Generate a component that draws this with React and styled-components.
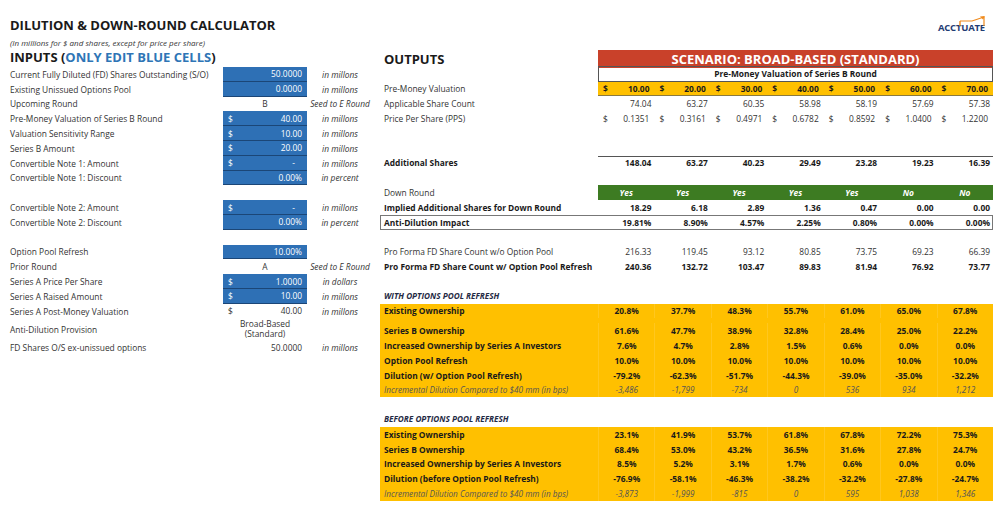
import styled, { createGlobalStyle } from "styled-components";

const GlobalStyle = createGlobalStyle`
  body {
    margin: 0;
    background: #fff;
    font-family: "Open Sans", "Liberation Sans", sans-serif;
    color: #333;
  }
`

const Page = styled.div`
  width: 1005px;
  height: 521px;
  overflow: hidden;
`

const Header = styled.header`
  display: flex;
  justify-content: space-between;
  align-items: center;
  height: 25px;
  padding: 13px 20px 0 10px;
`

const Title = styled.h1`
  margin: 0;
  font-size: 13px;
  line-height: 15px;
  font-weight: 700;
  color: #1a1a1a;
`

const Logo = styled.div`
  position: relative;
  font-size: 9.5px;
  font-weight: 700;
  color: #1f3c74;
  letter-spacing: -0.2px;
  margin-top: 4px;
  svg{
    position: absolute;
    left: 20px;
    top: -6px;
  }
`

const Main = styled.div`
  display: flex;
`

const Left = styled.div`
  width: 370px;
  padding-left: 10px;
`

const Note = styled.div`
  height: 10px;
  line-height: 10px;
  font-size: 8px;
  font-style: italic;
  color: #333;
  white-space: nowrap;
`

const InputsTitle = styled.h2`
  margin: 0;
  height: 19px;
  line-height: 19px;
  font-size: 13px;
  font-weight: 700;
  color: #1a1a1a;
  white-space: nowrap;
  span{
    color: #2e75b6;
  }
`

const InRow = styled.div`
  display: grid;
  grid-template-columns: 213px 84px 66px;
  height: ${p => p.$h || 14.8}px;
  font-size: 8.4px;
  align-items: center;
`

const Label = styled.div`
  white-space: nowrap;
`

const Value = styled.div`
  height: 100%;
  display: flex;
  align-items: center;
  justify-content: ${p => p.$center ? "center" : p.$cur ? "space-between" : "flex-end"};
  padding: 0 5px;
  box-sizing: border-box;
  text-align: center;
  line-height: 10px;
  background: ${p => p.$blue ? "#2e70b5" : "transparent"};
  color: ${p => p.$blue ? "#fff" : "#333"};
  box-shadow: ${p => p.$blue ? "inset 0 -1px 0 #1b4677" : "none"};
  .dash{
    padding-right: 7px;
  }
`

const Unit = styled.div`
  text-align: center;
  font-style: italic;
  white-space: nowrap;
`

const Right = styled.div`
  width: 613px;
  margin-top: 12px;
`

const OutRow = styled.div`
  display: grid;
  grid-template-columns: 218px repeat(7, 1fr);
  height: ${p => p.$h || 14.8}px;
  align-items: center;
  font-size: 8.4px;
  font-weight: ${p => p.$bold ? 700 : 400};
  color: ${p => p.$bold ? "#1a1a1a" : "#333"};
  box-shadow: ${p => p.$boxed ? "inset 0 0 0 1px #777" : "none"};
  margin-bottom: ${p => p.$gap || 0}px;
`

const OutLabel = styled.div`
  padding-left: 4px;
  white-space: nowrap;
`

const OutputsTitle = styled.h2`
  margin: 0;
  padding-left: 4px;
  font-size: 13px;
  font-weight: 700;
  color: #1a1a1a;
`

const Banner = styled.div`
  grid-column: 2 / span 7;
  height: 100%;
  background: #c9412a;
  color: #fff;
  font-size: 13px;
  font-weight: 700;
  display: flex;
  align-items: center;
  justify-content: center;
`

const SubHead = styled.div`
  grid-column: 2 / span 7;
  height: 100%;
  box-sizing: border-box;
  border: 1px solid #555;
  display: flex;
  align-items: center;
  justify-content: center;
  font-weight: 700;
  color: #1a1a1a;
`

const Cell = styled.div`
  height: 100%;
  box-sizing: border-box;
  display: flex;
  align-items: center;
  justify-content: ${p => p.$cur ? "space-between" : p.$center ? "center" : "flex-end"};
  padding: ${p => p.$cur ? "0 5px 0 5px" : "0 3px"};
  background: ${p => p.$bg || "transparent"};
  color: ${p => p.$color || "inherit"};
  font-style: ${p => p.$italic ? "italic" : "inherit"};
  box-shadow: ${p => p.$line === "top" ? "inset 0 1px 0 #555" : p.$line === "bottom" ? "inset 0 -1px 0 #8a7a40" : "none"};
`

const Section = styled.div`
  height: 14.8px;
  line-height: 14.8px;
  padding-left: 4px;
  font-size: 8.2px;
  font-weight: 700;
  font-style: italic;
  color: #1f2a44;
`

const YellowBlock = styled.div`
  background: #ffc000;
`

const YRow = styled(OutRow)`
  color: #1a1a1a;
  & > div + div{
    justify-content: center;
    border-left: 1px solid rgba(255,255,255,0.12);
  }
`

const Incr = styled(YRow)`
  font-size: 8.2px;
  font-style: italic;
  color: #555;
`

const Spacer = styled.div`
  height: ${p => p.$h || 14.8}px;
`

const inputs = [
  {label: "Current Fully Diluted (FD) Shares Outstanding (S/O)", value: "50.0000", blue: true, unit: "in millons"},
  {label: "Existing Unissued Options Pool", value: "0.0000", blue: true, unit: "in millons"},
  {label: "Upcoming Round", value: "B", center: true, unit: "Seed to E Round"},
  {label: "Pre-Money Valuation of Series B Round", value: "40.00", cur: true, blue: true, unit: "in millons"},
  {label: "Valuation Sensitivity Range", value: "10.00", cur: true, blue: true, unit: "in millons"},
  {label: "Series B Amount", value: "20.00", cur: true, blue: true, unit: "in millons"},
  {label: "Convertible Note 1: Amount", value: "-", cur: true, blue: true, unit: "in millons"},
  {label: "Convertible Note 1: Discount", value: "0.00%", blue: true, unit: "in percent"},
  null,
  {label: "Convertible Note 2: Amount", value: "-", cur: true, blue: true, unit: "in millons"},
  {label: "Convertible Note 2: Discount", value: "0.00%", blue: true, unit: "in percent"},
  null,
  {label: "Option Pool Refresh", value: "10.00%", blue: true, unit: ""},
  {label: "Prior Round", value: "A", center: true, unit: "Seed to E Round"},
  {label: "Series A Price Per Share", value: "1.0000", cur: true, blue: true, unit: "in dollars"},
  {label: "Series A Raised Amount", value: "10.00", cur: true, blue: true, unit: "in millons"},
  {label: "Series A Post-Money Valuation", value: "40.00", cur: true, unit: "in millons"},
  {label: "Anti-Dilution Provision", value: "Broad-Based (Standard)", center: true, unit: "", h: 21.6},
  {label: "FD Shares O/S ex-unissued options", value: "50.0000", unit: "in millons"},
]

const preMoney = ["10.00", "20.00", "30.00", "40.00", "50.00", "60.00", "70.00"]
const pps = ["0.1351", "0.3161", "0.4971", "0.6782", "0.8592", "1.0400", "1.2200"]

const withPool = [
  {label: "Existing Ownership", vals: ["20.8%", "37.7%", "48.3%", "55.7%", "61.0%", "65.0%", "67.8%"], gap: 5},
  {label: "Series B Ownership", vals: ["61.6%", "47.7%", "38.9%", "32.8%", "28.4%", "25.0%", "22.2%"]},
  {label: "Increased Ownership by Series A Investors", vals: ["7.6%", "4.7%", "2.8%", "1.5%", "0.6%", "0.0%", "0.0%"]},
  {label: "Option Pool Refresh", vals: ["10.0%", "10.0%", "10.0%", "10.0%", "10.0%", "10.0%", "10.0%"]},
  {label: "Dilution (w/ Option Pool Refresh)", vals: ["-79.2%", "-62.3%", "-51.7%", "-44.3%", "-39.0%", "-35.0%", "-32.2%"]},
]
const withIncr = ["-3,486", "-1,799", "-734", "0", "536", "934", "1,212"]

const beforePool = [
  {label: "Existing Ownership", vals: ["23.1%", "41.9%", "53.7%", "61.8%", "67.8%", "72.2%", "75.3%"]},
  {label: "Series B Ownership", vals: ["68.4%", "53.0%", "43.2%", "36.5%", "31.6%", "27.8%", "24.7%"]},
  {label: "Increased Ownership by Series A Investors", vals: ["8.5%", "5.2%", "3.1%", "1.7%", "0.6%", "0.0%", "0.0%"]},
  {label: "Dilution (before Option Pool Refresh)", vals: ["-76.9%", "-58.1%", "-46.3%", "-38.2%", "-32.2%", "-27.8%", "-24.7%"]},
]
const beforeIncr = ["-3,873", "-1,999", "-815", "0", "595", "1,038", "1,346"]

function DataRow({label, vals, bold, line, boxed}){
  return <OutRow $bold={bold} $boxed={boxed}>
    <OutLabel>{label}</OutLabel>
    {vals.map((v, i) => <Cell key={i} $line={line}>{v}</Cell>)}
  </OutRow>
}

function YellowRows({rows, incr}){
  return <YellowBlock>
    {rows.map(r => (
      <YRow key={r.label} $bold $gap={r.gap}>
        <OutLabel>{r.label}</OutLabel>
        {r.vals.map((v, i) => <Cell key={i}>{v}</Cell>)}
      </YRow>
    ))}
    <Incr>
      <OutLabel>Incremental Dilution Compared to $40 mm (in bps)</OutLabel>
      {incr.map((v, i) => <Cell key={i}>{v}</Cell>)}
    </Incr>
  </YellowBlock>
}

export default function App(){
  return <Page>
    <GlobalStyle/>
    <Header>
      <Title>DILUTION &amp; DOWN-ROUND CALCULATOR</Title>
      <Logo>
        ACCTUATE
        <svg width="30" height="12" viewBox="0 0 30 12">
          <line x1="2" y1="11" x2="2" y2="6" stroke="#f08a1c" strokeWidth="1.4"/>
          <polyline points="2,6 14,6 26,2" fill="none" stroke="#f08a1c" strokeWidth="1.2"/>
          <polygon points="27,1 22,1.5 25,4.5" fill="#f08a1c"/>
          <line x1="26" y1="2" x2="26" y2="11" stroke="#f08a1c" strokeWidth="1.2"/>
        </svg>
      </Logo>
    </Header>
    <Main>
      <Left>
        <Note>(In millions for $ and shares, except for price per share)</Note>
        <InputsTitle>INPUTS (<span>ONLY EDIT BLUE CELLS</span>)</InputsTitle>
        {inputs.map((r, i) => r ? (
          <InRow key={i} $h={r.h}>
            <Label>{r.label}</Label>
            <Value $blue={r.blue} $cur={r.cur} $center={r.center}>
              {r.cur && <span>$</span>}
              <span className={r.value === "-" ? "dash" : ""}>{r.value}</span>
            </Value>
            <Unit>{r.unit}</Unit>
          </InRow>
        ) : <Spacer key={i}/>)}
      </Left>
      <Right>
        <OutRow $h={16}>
          <OutputsTitle>OUTPUTS</OutputsTitle>
          <Banner>SCENARIO: BROAD-BASED (STANDARD)</Banner>
        </OutRow>
        <OutRow $h={15.6}>
          <div/>
          <SubHead>Pre-Money Valuation of Series B Round</SubHead>
        </OutRow>
        <OutRow>
          <OutLabel>Pre-Money Valuation</OutLabel>
          {preMoney.map(v => (
            <Cell key={v} $cur $bg="#ffc000" $line="bottom" style={{fontWeight: 700, color: "#1a1a1a"}}>
              <span>$</span><span>{v}</span>
            </Cell>
          ))}
        </OutRow>
        <DataRow label="Applicable Share Count" vals={["74.04", "63.27", "60.35", "58.98", "58.19", "57.69", "57.38"]}/>
        <OutRow>
          <OutLabel>Price Per Share (PPS)</OutLabel>
          {pps.map(v => <Cell key={v} $cur><span>$</span><span>{v}</span></Cell>)}
        </OutRow>
        <Spacer/>
        <Spacer/>
        <DataRow label="Additional Shares" bold line="top" vals={["148.04", "63.27", "40.23", "29.49", "23.28", "19.23", "16.39"]}/>
        <Spacer/>
        <OutRow>
          <OutLabel>Down Round</OutLabel>
          {["Yes", "Yes", "Yes", "Yes", "Yes", "No", "No"].map((v, i) => (
            <Cell key={i} $center $italic $bg="#3d7b22" $color="#fff" style={{fontWeight: 700}}>{v}</Cell>
          ))}
        </OutRow>
        <DataRow label="Implied Additional Shares for Down Round" bold vals={["18.29", "6.18", "2.89", "1.36", "0.47", "0.00", "0.00"]}/>
        <DataRow label="Anti-Dilution Impact" bold boxed vals={["19.81%", "8.90%", "4.57%", "2.25%", "0.80%", "0.00%", "0.00%"]}/>
        <Spacer/>
        <DataRow label="Pro Forma FD Share Count w/o Option Pool" vals={["216.33", "119.45", "93.12", "80.85", "73.75", "69.23", "66.39"]}/>
        <DataRow label="Pro Forma FD Share Count w/ Option Pool Refresh" bold vals={["240.36", "132.72", "103.47", "89.83", "81.94", "76.92", "73.77"]}/>
        <Spacer/>
        <Section>WITH OPTIONS POOL REFRESH</Section>
        <YellowRows rows={withPool} incr={withIncr}/>
        <Spacer/>
        <Section>BEFORE OPTIONS POOL REFRESH</Section>
        <YellowRows rows={beforePool} incr={beforeIncr}/>
      </Right>
    </Main>
  </Page>
}
